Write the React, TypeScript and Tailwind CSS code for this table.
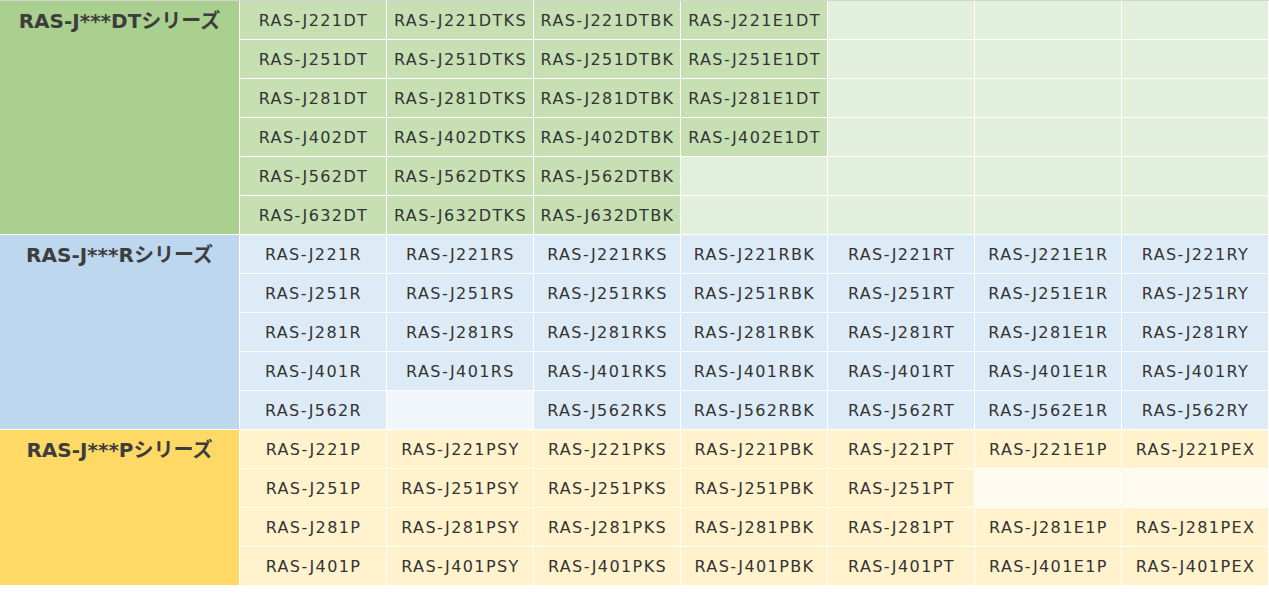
const dt = [
  ['RAS-J221DT', 'RAS-J221DTKS', 'RAS-J221DTBK', 'RAS-J221E1DT', '', '', ''],
  ['RAS-J251DT', 'RAS-J251DTKS', 'RAS-J251DTBK', 'RAS-J251E1DT', '', '', ''],
  ['RAS-J281DT', 'RAS-J281DTKS', 'RAS-J281DTBK', 'RAS-J281E1DT', '', '', ''],
  ['RAS-J402DT', 'RAS-J402DTKS', 'RAS-J402DTBK', 'RAS-J402E1DT', '', '', ''],
  ['RAS-J562DT', 'RAS-J562DTKS', 'RAS-J562DTBK', '', '', '', ''],
  ['RAS-J632DT', 'RAS-J632DTKS', 'RAS-J632DTBK', '', '', '', ''],
];

const r = [
  ['RAS-J221R', 'RAS-J221RS', 'RAS-J221RKS', 'RAS-J221RBK', 'RAS-J221RT', 'RAS-J221E1R', 'RAS-J221RY'],
  ['RAS-J251R', 'RAS-J251RS', 'RAS-J251RKS', 'RAS-J251RBK', 'RAS-J251RT', 'RAS-J251E1R', 'RAS-J251RY'],
  ['RAS-J281R', 'RAS-J281RS', 'RAS-J281RKS', 'RAS-J281RBK', 'RAS-J281RT', 'RAS-J281E1R', 'RAS-J281RY'],
  ['RAS-J401R', 'RAS-J401RS', 'RAS-J401RKS', 'RAS-J401RBK', 'RAS-J401RT', 'RAS-J401E1R', 'RAS-J401RY'],
  ['RAS-J562R', '', 'RAS-J562RKS', 'RAS-J562RBK', 'RAS-J562RT', 'RAS-J562E1R', 'RAS-J562RY'],
];

const p = [
  ['RAS-J221P', 'RAS-J221PSY', 'RAS-J221PKS', 'RAS-J221PBK', 'RAS-J221PT', 'RAS-J221E1P', 'RAS-J221PEX'],
  ['RAS-J251P', 'RAS-J251PSY', 'RAS-J251PKS', 'RAS-J251PBK', 'RAS-J251PT', '', ''],
  ['RAS-J281P', 'RAS-J281PSY', 'RAS-J281PKS', 'RAS-J281PBK', 'RAS-J281PT', 'RAS-J281E1P', 'RAS-J281PEX'],
  ['RAS-J401P', 'RAS-J401PSY', 'RAS-J401PKS', 'RAS-J401PBK', 'RAS-J401PT', 'RAS-J401E1P', 'RAS-J401PEX'],
];

const sections = [
  {
    title: 'RAS-J***DTシリーズ',
    rows: dt,
    head: 'bg-[#a9d08e] row-span-6',
    cell: 'bg-[#c6e0b4]',
    empty: 'bg-[#e2efda]',
  },
  {
    title: 'RAS-J***Rシリーズ',
    rows: r,
    head: 'bg-[#bdd7ee] row-span-5',
    cell: 'bg-[#ddebf7]',
    empty: 'bg-[#f0f6fc]',
  },
  {
    title: 'RAS-J***Pシリーズ',
    rows: p,
    head: 'bg-[#ffd966] row-span-4',
    cell: 'bg-[#fff2cc]',
    empty: 'bg-[#fffaef]',
  },
];

export default function App() {
  return (
    <div
      className="min-h-screen bg-white text-[#333] border-t border-[#d4d4d4]"
      style={{ fontFamily: '"DejaVu Sans", "Noto Sans CJK JP", sans-serif' }}
    >
      <div className="grid w-[1268px] grid-cols-[239px_repeat(7,146px)] auto-rows-[38px] gap-px">
        {sections.map((s) => [
          <div key={s.title} className={`${s.head} pt-[5px] text-center text-[20px] font-bold text-[#3d3d3d]`}>
            {s.title}
          </div>,
          ...s.rows.flatMap((row, i) =>
            row.map((name, j) => (
              <div
                key={`${s.title}-${i}-${j}`}
                className={`${name ? s.cell : s.empty} flex items-center justify-center pl-[1px] pt-[2px] text-[16px] tracking-[1.4px]`}
              >
                {name}
              </div>
            ))
          ),
        ])}
      </div>
    </div>
  );
}
